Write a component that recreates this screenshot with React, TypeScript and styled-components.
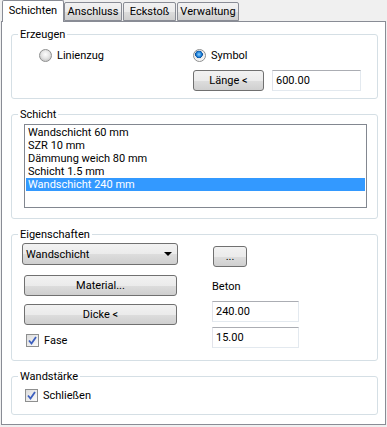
import React, { FC } from 'react';
import styled, { createGlobalStyle } from 'styled-components';

const GlobalStyle = createGlobalStyle`
  html, body {
    margin: 0;
    padding: 0;
    background: #f0f0f0;
  }
  body {
    font-family: Roboto, "Liberation Sans", Arial, sans-serif;
    font-size: 11px;
    color: #000;
  }
`;

const Dialog = styled.div`
  width: 387px;
  height: 427px;
  box-sizing: border-box;
  padding-left: 1px;
`;

const TabStrip = styled.div`
  display: flex;
  align-items: flex-end;
  height: 21px;
  padding-left: 1px;
  position: relative;
  z-index: 1;
`;

const Tab = styled.div<{ $active?: boolean; $w: number }>`
  box-sizing: border-box;
  width: ${(p) => p.$w}px;
  height: ${(p) => (p.$active ? 22 : 19)}px;
  margin-bottom: ${(p) => (p.$active ? -1 : 0)}px;
  margin-right: ${(p) => (p.$active ? 0 : 1)}px;
  border: 1px solid #898c95;
  border-bottom: ${(p) => (p.$active ? 'none' : '1px solid #898c95')};
  border-radius: 2px 2px 0 0;
  background: ${(p) => (p.$active ? '#fff' : 'linear-gradient(#f2f2f2, #ebebeb 50%, #dddddd 51%, #cfcfcf)')};
  display: flex;
  justify-content: center;
  padding-top: ${(p) => (p.$active ? 3 : 2)}px;
  line-height: 13px;
`;

const Panel = styled.div`
  box-sizing: border-box;
  width: 385px;
  height: 404px;
  border: 1px solid #898c95;
  background: #fff;
  padding: 12px 7px 0 9px;
  display: flex;
  flex-direction: column;
  gap: 15px;
`;

const Group = styled.div<{ $h: number }>`
  position: relative;
  box-sizing: border-box;
  height: ${(p) => p.$h}px;
  border: 1px solid #d5dfe5;
  border-radius: 3px;
`;

const GroupTitle = styled.span`
  position: absolute;
  top: -7px;
  left: 6px;
  padding: 0 2px 0 2px;
  background: #fff;
  line-height: 13px;
`;

const ErzeugenGrid = styled.div`
  display: grid;
  grid-template-columns: 154px auto;
  grid-template-rows: 14px 21px;
  row-gap: 8px;
  padding: 13px 0 0 27px;
`;

const Option = styled.label`
  display: flex;
  align-items: center;
  gap: 5px;
  line-height: 13px;
`;

const Radio = styled.span<{ $checked?: boolean }>`
  box-sizing: border-box;
  width: 13px;
  height: 13px;
  border-radius: 50%;
  border: 1px solid #8e8f8f;
  background: ${(p) =>
    p.$checked
      ? 'radial-gradient(circle at 45% 40%, #8fd2ff 0, #1d80d8 2.5px, #0b4f9c 3.6px, #e9e9e9 4px, #f6f6f6 6px)'
      : 'radial-gradient(circle at 50% 40%, #fdfdfd 0, #e4e4e4 4px, #cfcfcf 6px)'};
`;

const Check = styled.span`
  box-sizing: border-box;
  width: 13px;
  height: 13px;
  border: 1px solid #8e8f8f;
  background: linear-gradient(135deg, #dcdcdc, #fbfbfb);
  display: flex;
  align-items: center;
  justify-content: center;
`;

const Button = styled.div<{ $w: number }>`
  box-sizing: border-box;
  width: ${(p) => p.$w}px;
  height: 21px;
  border: 1px solid #707070;
  border-radius: 3px;
  background: linear-gradient(#f2f2f2, #ebebeb 50%, #dddddd 51%, #cfcfcf);
  display: flex;
  align-items: center;
  justify-content: center;
  line-height: 13px;
`;

const Input = styled.div<{ $w: number }>`
  box-sizing: border-box;
  width: ${(p) => p.$w}px;
  height: 21px;
  border: 1px solid #e3e9ef;
  border-top-color: #abadb3;
  border-left-color: #e2e3ea;
  display: flex;
  align-items: center;
  padding-left: 3px;
  line-height: 13px;
`;

const ListBox = styled.div`
  box-sizing: border-box;
  width: 343px;
  height: 84px;
  margin: 9px 0 0 12px;
  border: 1px solid #828790;
  padding: 1px;
`;

const ListRow = styled.div<{ $selected?: boolean }>`
  height: 13px;
  line-height: 13px;
  padding-left: 2px;
  background: ${(p) => (p.$selected ? '#3399ff' : 'transparent')};
  color: ${(p) => (p.$selected ? '#fff' : '#000')};
`;

const PropsGrid = styled.div`
  display: grid;
  grid-template-columns: 155px auto;
  grid-template-rows: 31px 26px 26px 22px;
  column-gap: 35px;
  padding: 8px 0 0 10px;
  align-items: start;
`;

const Combo = styled(Button)`
  justify-content: space-between;
  padding: 0 5px 0 3px;
  height: 22px;
`;

const Arrow = styled.span`
  width: 0;
  height: 0;
  border-left: 4px solid transparent;
  border-right: 4px solid transparent;
  border-top: 4px solid #000;
`;

const Cell = styled.div<{ $top?: number; $left?: number }>`
  margin-top: ${(p) => p.$top ?? 0}px;
  margin-left: ${(p) => p.$left ?? 0}px;
`;

const Label = styled.div`
  line-height: 13px;
`;

const CheckMark = () => (
  <svg width="9" height="9" viewBox="0 0 9 9">
    <path d="M1 4.5 L3.5 7.5 L8 1" fill="none" stroke="#3c5fbf" strokeWidth="1.8" />
  </svg>
);

const CheckOption: FC<{ label: string }> = ({ label }) => (
  <Option>
    <Check>
      <CheckMark />
    </Check>
    {label}
  </Option>
);

const items = ['Wandschicht 60 mm', 'SZR 10 mm', 'Dämmung weich 80 mm', 'Schicht 1.5 mm', 'Wandschicht 240 mm'];

export default function App() {
  return (
    <Dialog>
      <GlobalStyle />
      <TabStrip>
        <Tab $active $w={62}>Schichten</Tab>
        <Tab $w={58}>Anschluss</Tab>
        <Tab $w={53}>Eckstoß</Tab>
        <Tab $w={62}>Verwaltung</Tab>
      </TabStrip>
      <Panel>
        <Group $h={65}>
          <GroupTitle>Erzeugen</GroupTitle>
          <ErzeugenGrid>
            <Option>
              <Radio />
              Linienzug
            </Option>
            <Option>
              <Radio $checked />
              Symbol
            </Option>
            <div />
            <Cell style={{ display: 'flex', gap: 8 }}>
              <Button $w={71}>Länge &lt;</Button>
              <Input $w={89}>600.00</Input>
            </Cell>
          </ErzeugenGrid>
        </Group>

        <Group $h={105}>
          <GroupTitle>Schicht</GroupTitle>
          <ListBox>
            {items.map((it, i) => (
              <ListRow key={it} $selected={i === items.length - 1}>
                {it}
              </ListRow>
            ))}
          </ListBox>
        </Group>

        <Group $h={127}>
          <GroupTitle>Eigenschaften</GroupTitle>
          <PropsGrid>
            <Combo $w={156}>
              Wandschicht
              <Arrow />
            </Combo>
            <Cell $top={3} $left={1}>
              <Button $w={34}>...</Button>
            </Cell>
            <Cell $top={1} $left={2}>
              <Button $w={153}>Material...</Button>
            </Cell>
            <Cell $top={6}>
              <Label>Beton</Label>
            </Cell>
            <Cell $top={4} $left={2}>
              <Button $w={153}>Dicke &lt;</Button>
            </Cell>
            <Cell $top={1}>
              <Input $w={87}>240.00</Input>
            </Cell>
            <Cell $top={8} $left={4}>
              <CheckOption label="Fase" />
            </Cell>
            <Cell $top={1}>
              <Input $w={87}>15.00</Input>
            </Cell>
          </PropsGrid>
        </Group>

        <Group $h={39}>
          <GroupTitle>Wandstärke</GroupTitle>
          <Cell $top={12} $left={13}>
            <CheckOption label="Schließen" />
          </Cell>
        </Group>
      </Panel>
    </Dialog>
  );
}
